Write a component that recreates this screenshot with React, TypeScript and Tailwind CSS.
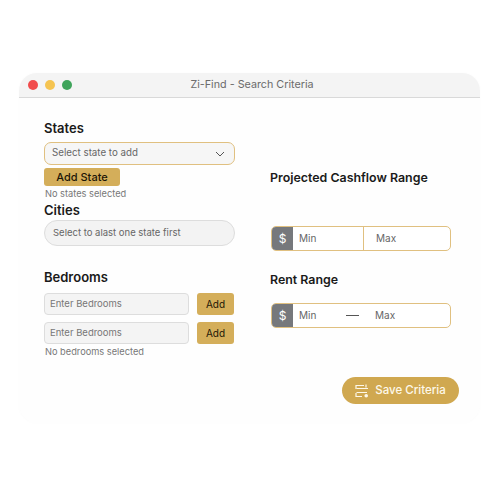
export default function App() {
  return (
    <div className="h-[500px] w-[500px] bg-white pl-[19px] pt-[73px] font-['Inter',sans-serif]">
      <div className="flex h-[350px] w-[461px] flex-col rounded-[18px] bg-[#fefefe] shadow-[0_0_3px_rgba(0,0,0,0.02)]">
        {/* Title bar */}
        <div className="relative flex h-[25px] items-center justify-center rounded-t-[18px] border-b border-[#d9d9d9] bg-[#f4f4f4] pl-[5px]">
          <div className="absolute left-[9px] top-[7px] flex gap-[7px]">
            <span className="h-[10px] w-[10px] rounded-full bg-[#f14c4c]" />
            <span className="h-[10px] w-[10px] rounded-full bg-[#f5c451]" />
            <span className="h-[10px] w-[10px] rounded-full bg-[#3fa45b]" />
          </div>
          <span className="text-[10.75px] text-[#6b6b6b]">Zi-Find - Search Criteria</span>
        </div>

        <div className="flex flex-1">
          {/* Left column */}
          <div className="ml-[25px] w-[191px] pt-[22px]">
            <h2 className="h-[16px] text-[13px] leading-[16px] font-semibold text-[#1a1a1a]">States</h2>
            <div className="mt-[6px] flex h-[23px] items-center justify-between rounded-[7px] border border-[#e0c080] bg-[#f6f6f6] pl-[7px] pr-[9px]">
              <span className="text-[9.75px] text-[#666666]">Select state to add</span>
              <svg width="10" height="6" viewBox="0 0 10 6" fill="none" stroke="#555555" strokeWidth="1">
                <path d="M1 1l4 4 4-4" />
              </svg>
            </div>
            <button className="mt-[3px] block h-[18px] w-[76px] rounded-[3px] bg-[#d4ae5a] text-[11px] leading-[18px] font-medium text-[#1d1607]">
              Add State
            </button>
            <p className="mt-[2px] h-[12px] pl-[1px] text-[9.25px] leading-[12px] text-[#777777]">No states selected</p>
            <h2 className="mt-[2px] h-[16px] text-[13px] leading-[16px] font-semibold text-[#1a1a1a]">Cities</h2>
            <div className="mt-[2px] flex h-[26px] items-center rounded-[13px] border border-[#dddddd] bg-[#f3f3f3] pl-[8px]">
              <span className="text-[9.5px] text-[#666666]">Select to alast one state first</span>
            </div>

            <h2 className="mt-[23px] h-[16px] text-[13px] leading-[16px] font-semibold text-[#1a1a1a]">Bedrooms</h2>
            <div className="mt-[8px] flex justify-between pr-[1px]">
              <div className="flex h-[22px] w-[145px] items-center rounded-[4px] border border-[#dddddd] bg-[#f4f4f4] pl-[5px] text-[9.5px] text-[#777777]">
                Enter Bedrooms
              </div>
              <button className="h-[22px] w-[37px] rounded-[3px] bg-[#d4ae5a] text-[10px] font-normal text-[#1d1607]">Add</button>
            </div>
            <div className="mt-[7px] flex justify-between pr-[1px]">
              <div className="flex h-[22px] w-[145px] items-center rounded-[4px] border border-[#dddddd] bg-[#f4f4f4] pl-[5px] text-[9.5px] text-[#777777]">
                Enter Bedrooms
              </div>
              <button className="h-[22px] w-[37px] rounded-[3px] bg-[#d4ae5a] text-[10px] font-normal text-[#1d1607]">Add</button>
            </div>
            <p className="mt-[2px] pl-[1px] text-[9.25px] leading-[12px] text-[#777777]">No bedrooms selected</p>
          </div>

          {/* Right column */}
          <div className="ml-[35px] flex w-[189px] flex-col pt-[72px]">
            <h2 className="h-[16px] text-[12.4px] leading-[16px] font-semibold text-[#1a1a1a]">Projected Cashflow Range</h2>
            <div className="mt-[40px] ml-[1px] flex h-[25px] w-[180px] overflow-hidden rounded-[5px] border border-[#e0c080] bg-white text-[10px] text-[#666666]">
              <span className="flex w-[21px] items-center justify-center bg-[#76787c] text-[12px] text-white">$</span>
              <span className="flex w-[71px] items-center border-r border-[#e0c080] pl-[6px]">Min</span>
              <span className="flex flex-1 items-center pl-[12px]">Max</span>
            </div>
            <h2 className="mt-[21px] h-[16px] text-[12.4px] leading-[16px] font-semibold text-[#1a1a1a]">Rent Range</h2>
            <div className="mt-[15px] ml-[1px] flex h-[25px] w-[180px] overflow-hidden rounded-[5px] border border-[#e0c080] bg-white text-[10px] text-[#666666]">
              <span className="flex w-[21px] items-center justify-center bg-[#76787c] text-[12px] text-white">$</span>
              <span className="flex w-[66px] items-center justify-between pl-[6px]">
                Min
                <span className="h-[1px] w-[13px] bg-[#555555]" />
              </span>
              <span className="flex flex-1 items-center pl-[16px]">Max</span>
            </div>
            <button className="mt-[49px] ml-[72px] flex h-[27px] w-[117px] items-center justify-center gap-[6px] rounded-full bg-[#d0a850] text-[11.5px] font-medium text-[#fdf8ea]">
              <svg width="14" height="14" viewBox="0 0 14 14" fill="none" stroke="#fdf8ea" strokeWidth="1.2">
                <path d="M1 5V1.5h8M1 9v3.5h6" />
                <path d="M11 0.5v3M1.5 4.5H13M1.5 8.5H12" />
                <circle cx="11.2" cy="11.7" r="1.8" fill="#fdf8ea" stroke="none" />
              </svg>
              Save Criteria
            </button>
          </div>
        </div>
      </div>
    </div>
  );
}
